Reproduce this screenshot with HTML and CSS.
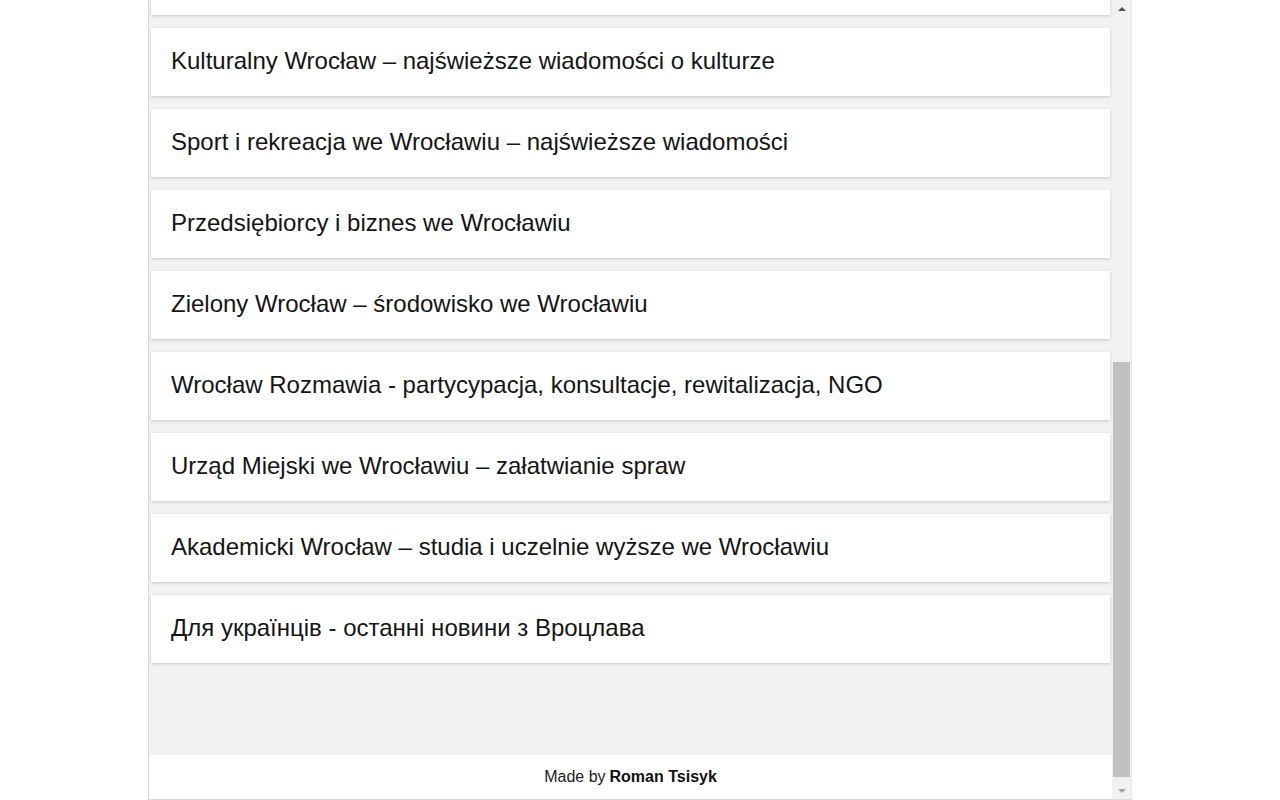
FILE: index.html
```html
<!DOCTYPE html>
<html lang="pl">
<head>
<meta charset="utf-8">
<title>Wrocław</title>
<link rel="stylesheet" href="styles.css">
</head>
<body>
<div class="frame">
  <div class="main">
    <div class="list">
      <div class="card card-top"></div>
      <div class="card">Kulturalny Wrocław – najświeższe wiadomości o kulturze</div>
      <div class="card">Sport i rekreacja we Wrocławiu – najświeższe wiadomości</div>
      <div class="card">Przedsiębiorcy i biznes we Wrocławiu</div>
      <div class="card">Zielony Wrocław – środowisko we Wrocławiu</div>
      <div class="card">Wrocław Rozmawia - partycypacja, konsultacje, rewitalizacja, NGO</div>
      <div class="card">Urząd Miejski we Wrocławiu – załatwianie spraw</div>
      <div class="card">Akademicki Wrocław – studia i uczelnie wyższe we Wrocławiu</div>
      <div class="card">Для українців - останні новини з Вроцлава</div>
    </div>
    <div class="footer">Made by <b>Roman Tsisyk</b></div>
  </div>
  <div class="scrollbar">
    <div class="arrow arrow-up"></div>
    <div class="track"><div class="thumb"></div></div>
    <div class="arrow arrow-down"></div>
  </div>
</div>
</body>
</html>
```

FILE: styles.css
```css
html, body {
  margin: 0;
  padding: 0;
  background: #ffffff;
}
body {
  font-family: "Liberation Sans", Arial, sans-serif;
  color: #151515;
}
.frame {
  margin-left: 148px;
  width: 984px;
  height: 800px;
  box-sizing: border-box;
  border-left: 1px solid #d8d8d8;
  border-right: 1px solid #e6e6e6;
  border-bottom: 1px solid #dcdcdc;
  display: flex;
}
.main {
  flex: 1;
  display: flex;
  flex-direction: column;
  min-width: 0;
}
.list {
  flex: 1;
  background: #f2f2f2;
  overflow: hidden;
  display: flex;
  flex-direction: column;
  gap: 13px;
  padding: 0 2px 0 2px;
}
.card {
  flex: none;
  box-sizing: border-box;
  height: 68px;
  background: #ffffff;
  box-shadow: 0 1px 3px rgba(0, 0, 0, 0.18);
  display: flex;
  align-items: center;
  padding-left: 20px;
  padding-bottom: 2px;
  font-size: 24px;
  white-space: nowrap;
}
.card-top {
  margin-top: -53px;
  border-top: 1px solid #d0d0d0;
}
.footer {
  flex: none;
  height: 44px;
  background: #ffffff;
  display: flex;
  align-items: center;
  justify-content: center;
  font-size: 16px;
  color: #222;
}
.footer b {
  margin-left: 4px;
  color: #111;
}
.scrollbar {
  flex: none;
  width: 19px;
  background: #f1f1f1;
  display: flex;
  flex-direction: column;
}
.arrow {
  flex: none;
  height: 17px;
  display: flex;
  align-items: center;
  justify-content: center;
}
.arrow::before {
  content: "";
  width: 0;
  height: 0;
  border-left: 4px solid transparent;
  border-right: 4px solid transparent;
}
.arrow-up::before {
  border-bottom: 4px solid #505050;
}
.arrow-down::before {
  border-top: 4px solid #a3a3a3;
}
.track {
  flex: 1;
  display: flex;
  flex-direction: column;
  padding-top: 345px;
  padding-bottom: 5px;
}
.thumb {
  flex: 1;
  margin: 0 1px;
  background: #c1c1c1;
}
```
